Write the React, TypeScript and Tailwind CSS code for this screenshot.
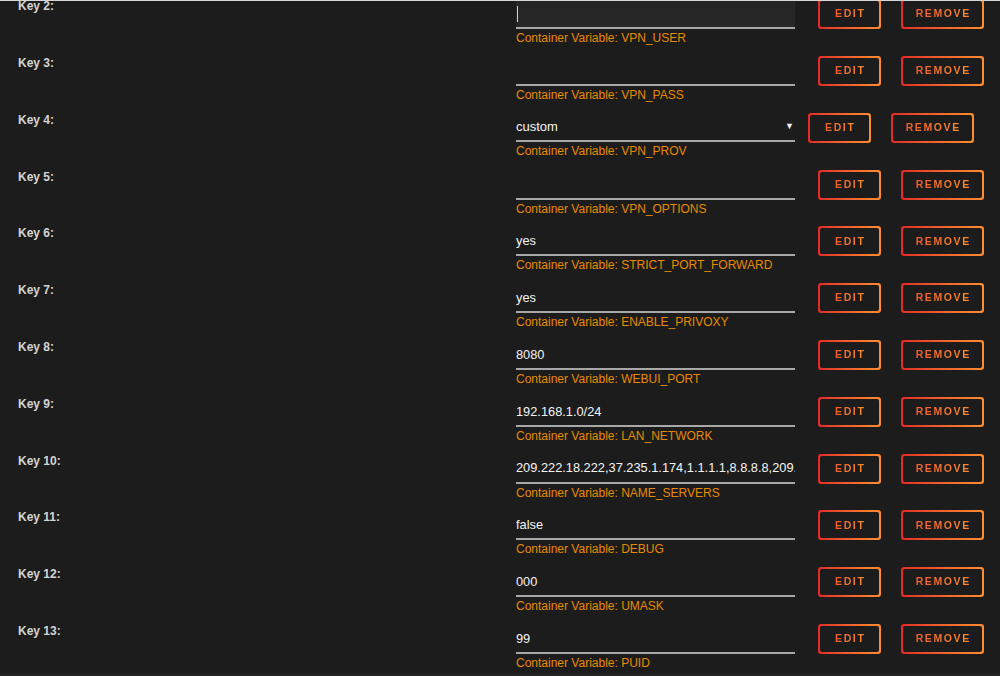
type Row = {
  n: number
  value: string
  variable: string
  focused?: boolean
  select?: boolean
}

const rows: Row[] = [
  { n: 2, value: '', variable: 'VPN_USER', focused: true },
  { n: 3, value: '', variable: 'VPN_PASS' },
  { n: 4, value: 'custom', variable: 'VPN_PROV', select: true },
  { n: 5, value: '', variable: 'VPN_OPTIONS' },
  { n: 6, value: 'yes', variable: 'STRICT_PORT_FORWARD' },
  { n: 7, value: 'yes', variable: 'ENABLE_PRIVOXY' },
  { n: 8, value: '8080', variable: 'WEBUI_PORT' },
  { n: 9, value: '192.168.1.0/24', variable: 'LAN_NETWORK' },
  { n: 10, value: '209.222.18.222,37.235.1.174,1.1.1.1,8.8.8.8,209.', variable: 'NAME_SERVERS' },
  { n: 11, value: 'false', variable: 'DEBUG' },
  { n: 12, value: '000', variable: 'UMASK' },
  { n: 13, value: '99', variable: 'PUID' },
]

function GradientButton({ label, width }: { label: string; width: string }) {
  return (
    <div className={`${width} h-[30px] rounded-[3px] bg-linear-to-r from-[#e22828] to-[#ff8c2f] p-[2px]`}>
      <div className="flex h-full w-full items-center justify-center rounded-[2px] bg-[#1c1c1c]">
        <span className="bg-linear-to-r from-[#ee5a2c] to-[#ff8c2f] bg-clip-text pl-[1.5px] text-[10.5px] font-bold tracking-[1.6px] text-transparent">
          {label}
        </span>
      </div>
    </div>
  )
}

function VarRow({ row }: { row: Row }) {
  return (
    <div className="flex h-[56.8px] items-start pt-[6px] pl-[18px]">
      <div className="-mt-[1px] w-[498px] text-[12px] leading-[15px] font-bold text-[#d4d4d4]">Key {row.n}:</div>
      <div className="w-[279px]">
        {row.select ? (
          <div className="flex h-[28px] items-center justify-between border-b-2 border-[#a8a8a8] pr-[1px]">
            <span className="text-[13px] text-[#f4f4f4]">{row.value}</span>
            <span className="text-[9px] text-[#f0f0f0]">▼</span>
          </div>
        ) : (
          <div
            className={`flex h-[29px] items-center overflow-hidden border-b-2 border-[#a8a8a8] ${
              row.focused ? 'bg-[#262626]' : ''
            }`}
          >
            {row.focused && <span className="ml-[1px] h-[16px] w-[1px] bg-[#d0d0d0]" />}
            <span className="whitespace-nowrap text-[12.8px] text-[#f4f4f4]">{row.value}</span>
          </div>
        )}
        <div className="mt-[2px] text-[12px] leading-[15px] text-[#e68a00]">Container Variable: {row.variable}</div>
      </div>
      <div className={`-mt-[1px] flex gap-[20px] ${row.select ? 'ml-[13px]' : 'ml-[23px]'}`}>
        <GradientButton label="EDIT" width="w-[63px]" />
        <GradientButton label="REMOVE" width="w-[83px]" />
      </div>
    </div>
  )
}

export default function App() {
  return (
    <div
      className="h-[676px] w-[1000px] overflow-hidden border-t border-[#d6d6d6] bg-[#1c1c1c]"
      style={{ fontFamily: '"Liberation Sans", Arial, sans-serif' }}
    >
      <div className="h-[673px] overflow-hidden">
        <div className="-mt-[6.8px]">
          {rows.map((r) => (
            <VarRow key={r.n} row={r} />
          ))}
        </div>
      </div>
      <div className="h-[2px] bg-[#242424]" />
    </div>
  )
}
